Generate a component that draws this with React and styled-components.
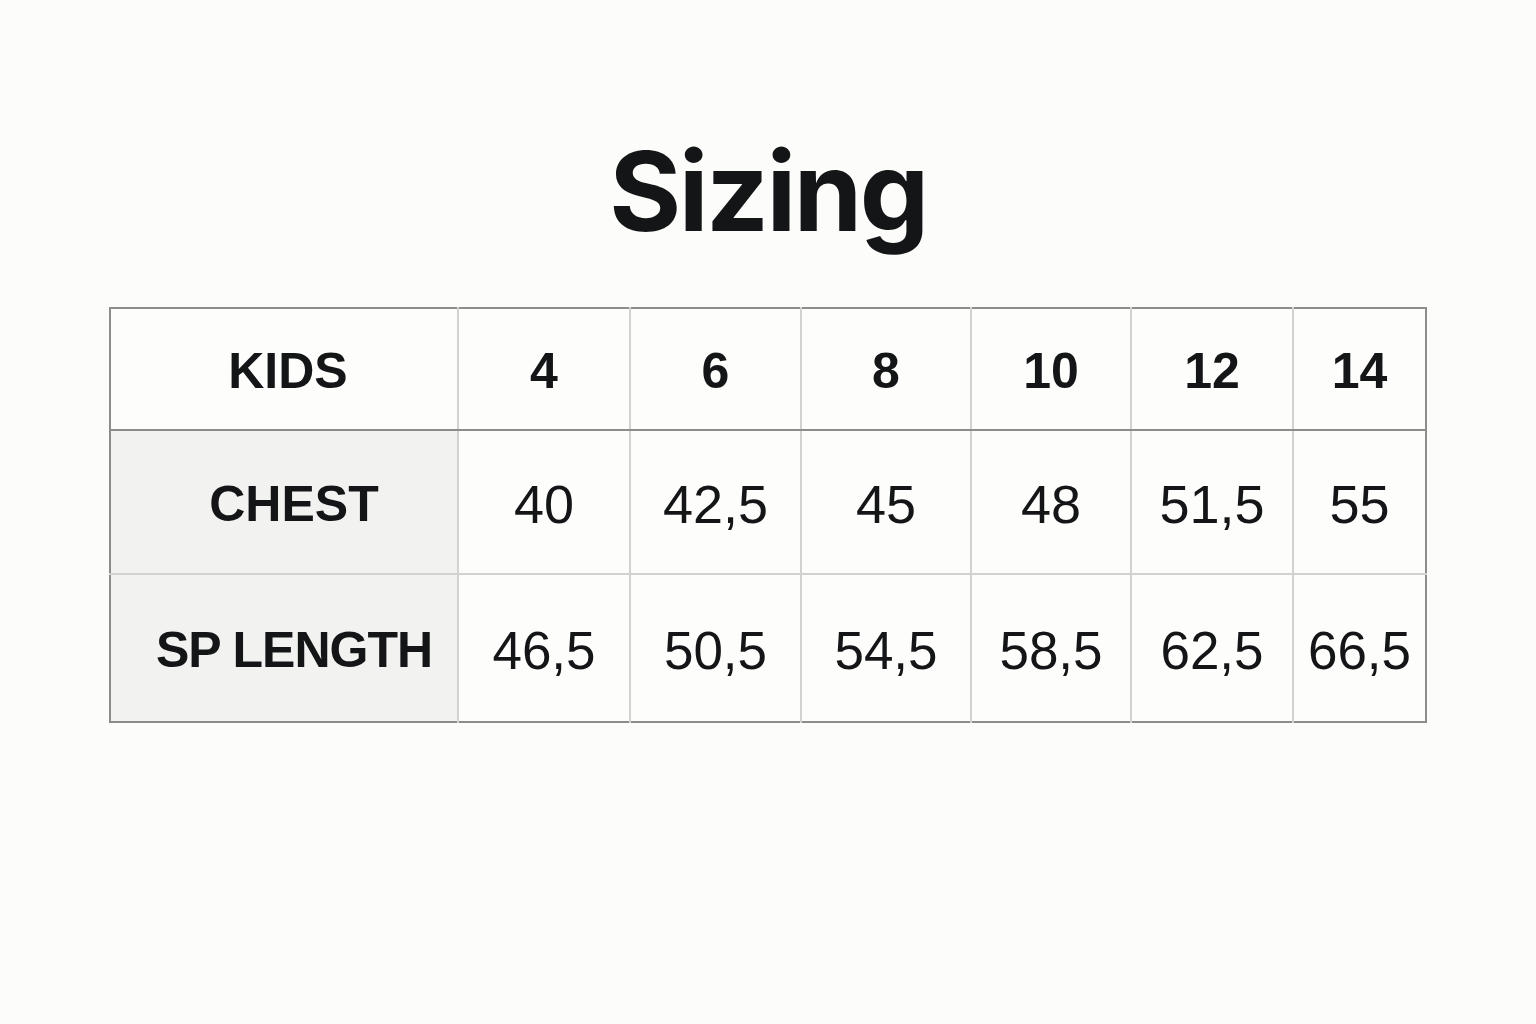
import styled, { createGlobalStyle } from 'styled-components';

const GlobalStyle = createGlobalStyle`
  html, body {
    margin: 0;
    padding: 0;
    background: #fcfcfa;
  }
`;

const Page = styled.div`
  width: 1536px;
  height: 1024px;
  display: flex;
  flex-direction: column;
  align-items: center;
  padding-top: 126px;
  box-sizing: border-box;
`;

const Title = styled.h1`
  margin: 0 0 51px;
  font-family: Inter, "Liberation Sans", sans-serif;
  font-weight: 700;
  font-size: 110px;
  line-height: 130px;
  letter-spacing: -2.5px;
  color: #141517;
`;

const Table = styled.table`
  border-collapse: collapse;
  table-layout: fixed;
  width: 1316px;
  border: 2px solid #8c8c8c;
  background: #fdfdfc;
  font-family: "Liberation Sans", Arial, sans-serif;
  color: #141517;
`;

// cell height = $h + 4px top padding (keeps text a touch below center)
const Cell = styled.td`
  height: ${({ $h }) => $h - 4}px;
  padding: 4px 0 0 ${({ $shift }) => $shift || 0}px;
  text-align: center;
  vertical-align: middle;
  font-size: ${({ $size }) => $size || 50}px;
  font-weight: ${({ $bold }) => ($bold ? 700 : 400)};
  letter-spacing: ${({ $tight }) => ($tight ? '-1px' : '0')};
  background: ${({ $label }) => ($label ? '#f2f2f1' : 'transparent')};
  border-left: 2px solid #d2d2d2;
  border-top: 2px solid #d2d2d2;
  &:first-child {
    border-left: none;
  }
`;

const HeadRow = styled.tr`
  & > td {
    border-top: none;
    border-bottom: 2px solid #8c8c8c;
  }
`;

const widths = [348, 172, 171, 170, 160, 162, 133];

const sizes = ['4', '6', '8', '10', '12', '14'];

const rows = [
  { label: 'CHEST', values: ['40', '42,5', '45', '48', '51,5', '55'], h: 142, size: 54 },
  { label: 'SP LENGTH', values: ['46,5', '50,5', '54,5', '58,5', '62,5', '66,5'], h: 146, size: 53 },
];

export default function App() {
  return (
    <>
      <GlobalStyle />
      <Page>
        <Title>Sizing</Title>
        <Table>
          <colgroup>
            {widths.map((w, i) => (
              <col key={i} style={{ width: w }} />
            ))}
          </colgroup>
          <tbody>
            <HeadRow>
              <Cell $h={120} $bold $shift={8}>KIDS</Cell>
              {sizes.map((s) => (
                <Cell key={s} $h={120} $bold>{s}</Cell>
              ))}
            </HeadRow>
            {rows.map((r) => (
              <tr key={r.label}>
                <Cell $h={r.h} $bold $label $shift={20} $tight={r.label.length > 6}>
                  {r.label}
                </Cell>
                {r.values.map((v, i) => (
                  <Cell key={i} $h={r.h} $size={r.size}>{v}</Cell>
                ))}
              </tr>
            ))}
          </tbody>
        </Table>
      </Page>
    </>
  );
}
